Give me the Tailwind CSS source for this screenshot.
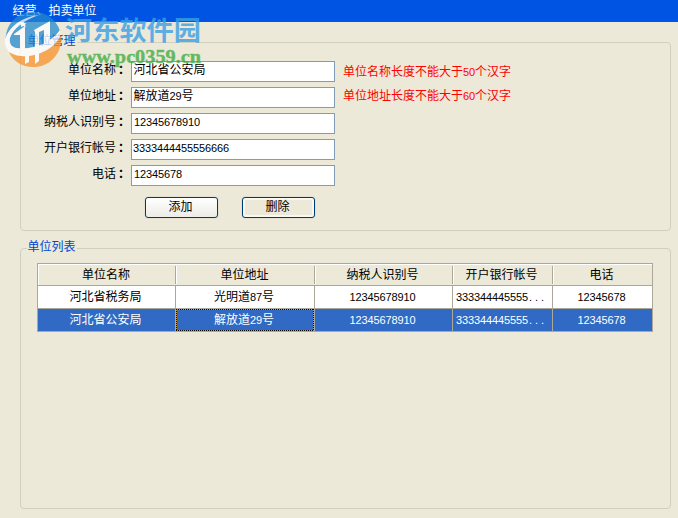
<!DOCTYPE html>
<html lang="zh-CN">
<head>
    <meta charset="UTF-8">
    <meta name="viewport" content="width=device-width, initial-scale=1.0">
    <title>经营、拍卖单位</title>
    <script src="https://cdn.jsdelivr.net/npm/@tailwindcss/browser@4"></script>
</head>
<body class="relative w-[678px] h-[518px] overflow-hidden bg-[#ece9d8] text-[12px] leading-[16px] text-black font-['Liberation_Sans','Noto_Sans_CJK_SC',sans-serif]">

<!-- Title bar -->
<div class="h-[22px] bg-[#0054e3] pl-[12.5px] pt-[3px] text-white">经营、拍卖单位</div>

<div class="pl-5 pr-[7px]">
    <!-- Unit form -->
    <section class="mt-5 h-[189px] border border-[#d0d0bf] rounded-[4px]">
        <h2 class="w-[50px] h-4 ml-[6px] -mt-[10px] pl-[0.5px] bg-[#ece9d8] text-[#0046d5]">单位管理</h2>
        <div class="mt-3 flex flex-col gap-[5px]">
            <div class="flex h-[21px]">
                <label class="w-[110px] pl-[47px] pt-px">单位名称<span class="pl-[2px] font-bold">：</span></label>
                <div class="w-[204px] h-[21px] border border-[#7f9db9] bg-white pl-[1.5px] leading-[16px]">河北省公安局</div>
                <span class="ml-2 mt-[3px] text-[#ff0000]">单位名称长度不能大于<span class="text-[11px] tracking-[-0.12px]">50</span>个汉字</span>
            </div>
            <div class="flex h-[21px]">
                <label class="w-[110px] pl-[47px] pt-px">单位地址<span class="pl-[2px] font-bold">：</span></label>
                <div class="w-[204px] h-[21px] border border-[#7f9db9] bg-white pl-[1.5px] leading-[17px]">解放道<span class="text-[11px] tracking-[-0.12px]">29</span>号</div>
                <span class="ml-2 mt-px text-[#ff0000]">单位地址长度不能大于<span class="text-[11px] tracking-[-0.12px]">60</span>个汉字</span>
            </div>
            <div class="flex h-[21px]">
                <label class="w-[110px] pl-[23px] pt-px">纳税人识别号<span class="pl-[2px] font-bold">：</span></label>
                <div class="w-[204px] h-[21px] border border-[#7f9db9] bg-white pl-[2px] leading-[17px] text-[11px] tracking-[-0.12px]">12345678910</div>
            </div>
            <div class="flex h-[21px]">
                <label class="w-[110px] pl-[23px] pt-px">开户银行帐号<span class="pl-[2px] font-bold">：</span></label>
                <div class="w-[204px] h-[21px] border border-[#7f9db9] bg-white pl-px leading-[17px] text-[11px] tracking-[-0.12px]">3333444455556666</div>
            </div>
            <div class="flex h-[21px]">
                <label class="w-[110px] pl-[71px] pt-px">电话<span class="pl-[2px] font-bold">：</span></label>
                <div class="w-[204px] h-[21px] border border-[#7f9db9] bg-white pl-[2px] leading-[17px] text-[11px] tracking-[-0.12px]">12345678</div>
            </div>
        </div>
        <div class="mt-[11px] ml-[124px] flex gap-6">
            <button class="w-[73px] h-[21px] pr-[2px] border border-[#003c74] rounded-[3px] bg-linear-to-b from-white to-[#ecebe6] leading-[19px] shadow-[0_0_0_1px_#e4e1d1]">添加</button>
            <button class="w-[73px] h-[21px] pr-[2px] border border-[#003c74] rounded-[3px] bg-[#ece9d8] leading-[19px] shadow-[inset_0_0_0_2px_#f8f7f3,0_0_0_1px_#e4e1d1]">删除</button>
        </div>
    </section>

    <!-- Unit list -->
    <section class="mt-[17px] h-[261px] border border-[#d0d0bf] rounded-[4px]">
        <h2 class="w-[50px] h-4 ml-[6px] -mt-[10px] pl-[0.5px] bg-[#ece9d8] text-[#0046d5]">单位列表</h2>
        <div class="ml-4 mt-2 w-[616px] border border-[#aca899] text-center">
            <div class="grid grid-cols-[138px_139px_138px_100px_99px] h-[22px] border-b border-[#aca899] shadow-[inset_1px_1px_0_#fff] leading-[23px]">
                <div class="pr-[2px]">单位名称</div>
                <div class="relative pr-[2px]">单位地址<i class="absolute -left-px top-[2px] w-[2px] h-[18px] bg-white border-l border-[#aca899]"></i></div>
                <div class="relative pr-[3px]">纳税人识别号<i class="absolute -left-px top-[2px] w-[2px] h-[18px] bg-white border-l border-[#aca899]"></i></div>
                <div class="relative pr-[3px]">开户银行帐号<i class="absolute -left-px top-[2px] w-[2px] h-[18px] bg-white border-l border-[#aca899]"></i></div>
                <div class="relative pr-[2px]">电话<i class="absolute -left-px top-[2px] w-[2px] h-[18px] bg-white border-l border-[#aca899]"></i></div>
            </div>
            <div class="grid grid-cols-[138px_139px_138px_100px_99px] h-[23px] bg-white border-b border-[#aca899] leading-[22px]">
                <div class="border-r border-[#aca899] pr-[2px]">河北省税务局</div>
                <div class="border-r border-[#aca899] pr-[2px]">光明道<span class="text-[11px] tracking-[-0.12px]">87</span>号</div>
                <div class="border-r border-[#aca899] pr-[2px] text-[11px] tracking-[-0.12px]">12345678910</div>
                <div class="border-r border-[#aca899] pl-[3px] text-left text-[11px] tracking-[-0.12px]">333344445555<span class="tracking-[2.94px] pl-px">...</span></div>
                <div class="pr-[2px] text-[11px] tracking-[-0.12px]">12345678</div>
            </div>
            <div class="grid grid-cols-[138px_139px_138px_100px_99px] h-[22px] bg-[#316ac5] text-white leading-[22px]">
                <div class="border-r border-[#aca899] pr-[2px]">河北省公安局</div>
                <div class="relative border-r border-[#aca899] pr-[2px]">解放道<span class="text-[11px] tracking-[-0.12px]">29</span>号
                    <!-- focus rectangle -->
                    <svg class="absolute left-0 top-0" width="138" height="22" fill="none" shape-rendering="crispEdges"><rect x=".5" y=".5" width="137" height="21" stroke="#ce953a"/><path d="M0 .5H138M0 21.5H138M.5 0V22M137.5 0V22" stroke="#000" stroke-dasharray="1 1"/></svg>
                </div>
                <div class="border-r border-[#aca899] pr-[2px] text-[11px] tracking-[-0.12px]">12345678910</div>
                <div class="border-r border-[#aca899] pl-[3px] text-left text-[11px] tracking-[-0.12px]">333344445555<span class="tracking-[2.94px] pl-px">...</span></div>
                <div class="pr-[2px] text-[11px] tracking-[-0.12px]">12345678</div>
            </div>
        </div>
    </section>
</div>

<!-- Watermark -->
<svg class="absolute left-0 top-0 pointer-events-none" width="226" height="80">
    <g opacity=".75">
        <path d="M6 46C3 27 15 12 33 12C46 12 56 19 60 31C50 44 28 53 6 46Z" fill="#2389d0"/>
        <path d="M9 52C30 58 51 49 61 35C63 53 50 67 33 67C22 67 13 61 9 52Z" fill="#f9922a"/>
        <path d="M5 39C9 27 21 17 39 15C24 20 13 29 10 38C9 44 12 47 16 48C33 51 51 43 60 30C62 36 57 43 50 48C37 57 19 59 9 52C6 48 4 44 5 39Z" fill="#fff"/>
        <path d="M14 34L25 26V50H20V35H14ZM25 64V50H29V62ZM34 30L50 21V47L44 50V30L39 32V61L35 64V32Z" fill="#fff"/>
        <path d="M23 21L24 23L26 23L25 25L26 27L23 26L21 27L21 25L20 23L22 23Z" fill="#fff"/>
    </g>
    <text x="65" y="40" textLength="136" lengthAdjust="spacingAndGlyphs" font-size="26" font-weight="700" fill="#3a9fe5" opacity=".8" style="font-family:'Noto Sans CJK SC',sans-serif">河东软件园</text>
    <text x="67" y="63" textLength="134" lengthAdjust="spacingAndGlyphs" font-size="19" font-weight="700" fill="#43ad45" stroke="#43ad45" stroke-width=".4" opacity=".8" style="font-family:'Liberation Serif',serif">www.pc0359.cn</text>
</svg>
</body>
</html>
